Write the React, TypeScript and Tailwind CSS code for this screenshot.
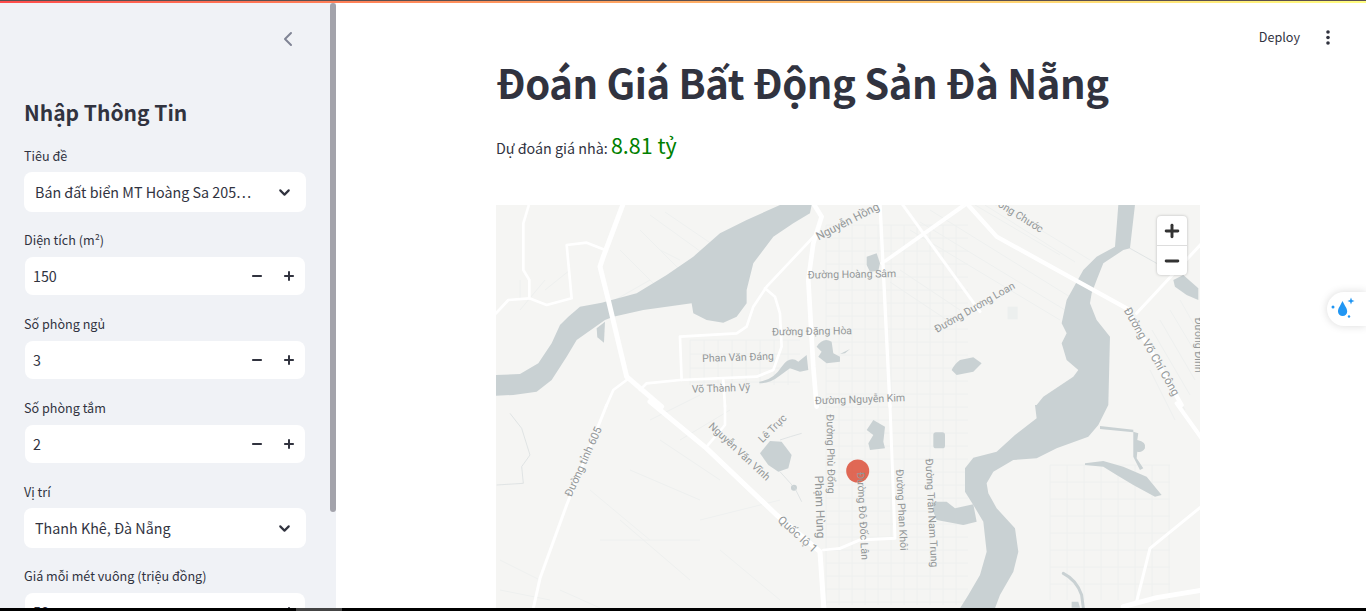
import { ChevronDown, ChevronLeft, Minus, Plus } from 'lucide-react';

const SANS = { fontFamily: '"Noto Sans CJK SC", "Noto Sans", sans-serif' };

const WATER = '#c9d1d3';
const ROAD = '#ffffff';
const GRID = '#eef0ef';

function SelectBox({ label, value }: { label: string; value: string }) {
  return (
    <div className="flex flex-col">
      <label className="h-[20px] text-[12.6px] leading-[20px] text-[#31333f]">{label}</label>
      <div className="mt-[6px] flex h-[40px] w-[282px] items-center justify-between rounded-lg bg-white pl-[11px] pr-[13px] text-[14.3px] text-[#31333f]">
        <span className="truncate">{value}</span>
        <ChevronDown size={17} strokeWidth={3} className="shrink-0" />
      </div>
    </div>
  );
}

function NumberBox({ label, value }: { label: string; value: string }) {
  return (
    <div className="flex flex-col pb-px">
      <label className="h-[20px] text-[12.6px] leading-[20px] text-[#31333f]">{label}</label>
      <div className="ml-px mt-[7px] flex h-[38px] w-[280px] items-center justify-between rounded-lg bg-white pl-[8px] pr-[9px] text-[14.3px] text-[#31333f]">
        <span>{value}</span>
        <div className="flex items-center gap-[18px]">
          <Minus size={14} strokeWidth={3.4} />
          <Plus size={14} strokeWidth={3.4} />
        </div>
      </div>
    </div>
  );
}

function Label({ x, y, r, t, size = 10.5 }: { x: number; y: number; r: number; t: string; size?: number }) {
  return (
    <text
      x={x}
      y={y}
      transform={`rotate(${r} ${x} ${y})`}
      textAnchor="middle"
      dominantBaseline="middle"
      fontFamily="Roboto, sans-serif"
      fontSize={size}
      fill="#939798"
    >
      {t}
    </text>
  );
}

// parallel street lines for the built-up blocks
function streets(x0: number, x1: number, y0: number, y1: number, step: number) {
  let d = '';
  for (let x = x0; x <= x1; x += step) d += `M${x} ${y0}V${y1}`;
  for (let y = y0; y <= y1; y += step) d += `M${x0} ${y}H${x1}`;
  return d;
}

function MapDrawing() {
  return (
    <svg viewBox="496 205 704 403" className="block h-[403px] w-[704px]">
      <rect x="496" y="205" width="704" height="403" fill="#f5f5f3" />

      {/* faint street blocks */}
      <g stroke={GRID} strokeWidth="1" fill="none">
        <path d={streets(826, 968, 225, 605, 13)} />
        <path d={streets(690, 800, 340, 385, 14)} />
        <path d={streets(1050, 1170, 465, 600, 17)} />
        <path d="M930 210L1075 300M920 222L1065 310M910 230L1060 320M1000 205L1090 260M985 205L1075 262M975 205L1060 255M900 270L960 310M890 282L950 322" />
        <path d="M1160 320L1195 380M1152 330L1190 395M1145 340L1185 410M1150 370L1175 420M1180 300L1200 335M1170 310L1200 360" />
        <path d="M640 230L700 290M620 250L670 300M650 215L740 280M665 212L750 270M630 470L700 500M590 490L650 540M600 540H700M620 520L690 580M700 520L780 500M720 550L780 600M660 440L720 480M500 560L540 580M500 590L550 600M560 590L600 608" />
        <path d="M660 250L680 260M615 300L650 280M545 290L570 270M520 310L545 280M520 280V300M650 420L700 395M680 440L730 410" />
      </g>

      {/* water */}
      <g fill={WATER}>
        <g transform="translate(480 200) scale(0.3333)">
          <path d="M48 525L120 522L175 490L215 430L240 375L265 350L300 320L365 308L395 300L470 280L560 225L640 170L720 100L800 60L900 15H995L990 40L940 70L880 110L850 150L820 190L800 270L800 310L770 350L730 368L680 360L640 340L635 310L560 320L490 330L400 350L375 360L340 385L290 420L260 470L215 540L170 575L100 585L48 587Z" />
          <path d="M350 385L375 365L372 428L352 412Z" />
          <path d="M1010 440Q1030 410 1055 425L1060 460L1080 470V485L1040 490L1015 470L1025 455Z" />
          <path d="M838 545Q880 540 905 500Q930 465 955 485L980 465L985 510L960 515L930 505L895 530Q870 550 838 550Z" />
        </g>
        <g transform="translate(840 200) scale(0.3333)">
          <path d="M835 15H885L870 145L850 150L790 190L770 240L755 280L750 310L770 360L810 410L805 615H590L610 590L700 530L715 510L680 480L665 430L680 400L665 370L680 300L705 255L730 210L770 170L825 140L830 80Z" />
          <path d="M1000 240L1030 225L1075 265V300L1040 285L1005 260Z" />
          <path d="M80 170L110 160L120 190L115 212L90 215L80 195Z" />
          <path d="M335 510Q345 490 360 480L400 472L425 490L400 515L350 525Z" />
          <path d="M0 462L30 447L15 460Z" />
        </g>
        <g transform="translate(480 405) scale(0.3333)">
          <path d="M840 145L870 108L905 110L935 150L925 190L895 200L865 180Z" />
          <circle cx="942" cy="248" r="9" />
        </g>
        <g transform="translate(840 405) scale(0.3333)">
          <path d="M585 0H805L775 60L745 95L650 130L590 160L520 165L460 200L440 235L445 265L470 310L525 370L535 440L520 500L480 570L465 610H360L385 570L420 510L440 440L430 350L400 300L375 260V190L400 158L470 140L525 90L590 40Z" />
          <path d="M280 290H320L345 310L400 298L410 350L370 360L290 345L280 320Z" />
          <path d="M735 175L790 168L850 185L885 200L920 215L965 270L945 275L880 240L830 210L790 185L735 180Z" />
          <path d="M780 63L880 74V82L780 72Z" />
          <path d="M880 80L895 85L892 105Q920 110 915 130Q905 145 892 140L890 160L910 190L900 195L880 155Z" />
          <rect x="280" y="82" width="35" height="48" rx="8" />
          <path d="M100 45L135 65L130 110L135 130L90 135L85 115L100 90L80 75Z" />
          <path d="M695 590L715 590L720 608H695Z" />
        </g>
      </g>
      <g transform="translate(840 405) scale(0.3333)" fill="none" stroke={WATER}>
        <path d="M670 505Q710 525 725 570L730 608" strokeWidth="9" strokeLinecap="round" />
      </g>
      <g transform="translate(480 405) scale(0.3333)" fill="none" stroke="#d5dbdc" strokeWidth="2">
        <path d="M900 105Q930 95 965 85M900 200L945 250L965 290M90 25L125 70L150 150L125 185L130 235L50 240" />
      </g>
      <g transform="translate(840 200) scale(0.3333)">
        <rect x="503" y="320" width="30" height="38" fill="#ecefee" />
        <path d="M870 145L950 190" stroke="#d5dbdc" strokeWidth="2" fill="none" />
      </g>

      {/* roads */}
      <g fill="none" stroke={ROAD} strokeLinejoin="round" strokeLinecap="round">
        <g transform="translate(480 200) scale(0.3333)">
          <path d="M430 10L370 170L360 200L385 300L440 530L545 620" strokeWidth="15" />
          <path d="M148 10L130 70V210L148 240V295L200 315L275 295L260 135L320 128L370 148" strokeWidth="8" />
          <path d="M48 340L85 300L148 295" strokeWidth="8" />
          <path d="M1003 108L860 260L820 320L800 380L770 400L600 410L605 540" strokeWidth="8" />
          <path d="M855 265L885 290L900 340L905 440L880 510L830 530L600 540L500 550L480 570" strokeWidth="8" />
          <path d="M440 540L400 570L378 620" strokeWidth="8" />
          <path d="M1000 10L1025 50L1000 130L985 240L1000 500L1010 620" strokeWidth="14" />
          <path d="M730 540L735 620" strokeWidth="8" />
        </g>
        <g transform="translate(480 405) scale(0.3333)">
          <path d="M510 -10L680 130L890 330L1020 440L1032 615" strokeWidth="15" />
          <path d="M380 0L260 300L180 520L160 610" strokeWidth="9" />
          <path d="M735 0V60L680 125" strokeWidth="8" />
          <path d="M1030 435L1080 430" strokeWidth="8" />
        </g>
        <g transform="translate(840 200) scale(0.3333)">
          <path d="M120 10L150 620" strokeWidth="10" />
          <path d="M185 10L420 335" strokeWidth="9" />
          <path d="M125 190L370 15" strokeWidth="9" />
          <path d="M138 185L380 15" strokeWidth="5" />
          <path d="M380 10L470 110L860 325L1025 615" strokeWidth="13" />
          <path d="M890 340L1090 125" strokeWidth="9" />
        </g>
        <g transform="translate(840 405) scale(0.3333)">
          <path d="M150 0L165 400L60 405L0 430" strokeWidth="9" />
          <path d="M1090 300L930 430L890 590" strokeWidth="9" />
          <path d="M850 605L950 578L1090 555" strokeWidth="15" />
          <path d="M1010 -5L1085 100" strokeWidth="12" />
        </g>
      </g>

      {/* point on the map */}
      <circle cx={857.7} cy={471} r={11.5} fill="#dc4f38" fillOpacity={0.85} />

      {/* labels */}
      <Label x={848} y={222} r={-27} t="Nguyễn Hồng" size={11.5} />
      <Label x={852} y={275} r={-1} t="Đường Hoàng Sâm" />
      <Label x={812} y={332} r={-1} t="Đường Đặng Hòa" />
      <Label x={738} y={358} r={-2} t="Phan Văn Đáng" />
      <Label x={721} y={389} r={-2} t="Võ Thành Vỹ" />
      <Label x={860} y={400} r={-2} t="Đường Nguyễn Kim" />
      <Label x={975} y={308} r={-30} t="Đường Dương Loan" />
      <Label x={1001} y={205} r={32} t="Đường Lương Chước" />
      <Label x={1151} y={352} r={60} t="Đường Võ Chí Công" size={11.5} />
      <Label x={1198} y={345} r={90} t="Đường Đình" />
      <Label x={584} y={462} r={-66} t="Đường tỉnh 605" size={11} />
      <Label x={739} y={452} r={43} t="Nguyễn Văn Vĩnh" />
      <Label x={773} y={429} r={-45} t="Lê Trực" />
      <Label x={830} y={454} r={89} t="Đường Phù Đổng" />
      <Label x={819} y={507} r={88} t="Phạm Hùng" size={12} />
      <Label x={797} y={535} r={42} t="Quốc lộ 1" size={11.5} />
      <Label x={901} y={510} r={87} t="Đường Phan Khôi" />
      <Label x={931} y={513} r={87} t="Đường Trần Nam Trung" />
      <Label x={862} y={516} r={87} t="Đường Đô Đốc Lân" />
    </svg>
  );
}

export default function App() {
  return (
    <div className="relative flex h-[611px] w-[1366px] flex-col overflow-hidden bg-white" style={SANS}>
      <div className="h-px w-full shrink-0 bg-[#5c5050]" />
      <div className="h-[2px] w-full shrink-0 bg-gradient-to-r from-[#ff4b4b] to-[#fffd80]" />
      <div className="flex min-h-0 flex-1">
        {/* sidebar */}
        <aside className="relative flex w-[336px] shrink-0 flex-col overflow-hidden bg-[#f0f2f6] px-[24px]">
          <div className="flex h-[73px] shrink-0 items-center justify-end pr-[12px] pb-[2px] text-[#808495]">
            <ChevronLeft size={24} strokeWidth={2} />
          </div>
          <h2 className="h-[60px] shrink-0 pt-[20px] text-[21px] font-semibold leading-[32px] text-[#31333f]">Nhập Thông Tin</h2>
          <div className="flex flex-col gap-[18px] pt-[10px]">
            <SelectBox label="Tiêu đề" value="Bán đất biển MT Hoàng Sa 205…" />
            <NumberBox label="Diện tích (m²)" value="150" />
            <NumberBox label="Số phòng ngủ" value="3" />
            <NumberBox label="Số phòng tắm" value="2" />
            <SelectBox label="Vị trí" value="Thanh Khê, Đà Nẵng" />
            <NumberBox label="Giá mỗi mét vuông (triệu đồng)" value="58" />
          </div>
          <div className="absolute right-0 top-0 h-[509px] w-[6px] rounded-full bg-[#a3a3ab]" />
        </aside>

        {/* main column */}
        <main className="relative flex-1 overflow-hidden pl-[160px]">
          <div className="absolute right-[36px] top-[24px] flex items-center gap-[26px] text-[12.6px] leading-[20px] text-[#31333f]">
            <span>Deploy</span>
            <svg width="4" height="15" viewBox="0 0 4 15" fill="#31333f">
              <circle cx="2" cy="2" r="1.8" />
              <circle cx="2" cy="7.5" r="1.8" />
              <circle cx="2" cy="13" r="1.8" />
            </svg>
          </div>
          <h1 className="pt-[45px] text-[40px] font-bold leading-[68px] tracking-[-0.4px] text-[#31333f]">Đoán Giá Bất Động Sản Đà Nẵng</h1>
          <p className="mt-[13px] h-[76px] text-[14.3px] leading-[32px] text-[#31333f]">
            Dự đoán giá nhà: <span className="text-[21.5px] text-[#008000]">8.81 tỷ</span>
          </p>
          <div className="relative h-[403px] w-[704px]">
            <MapDrawing />
            <div className="absolute right-[13px] top-[11px] flex w-[30px] flex-col rounded bg-white text-[#333] shadow-[0_0_3px_rgba(0,0,0,0.25)]">
              <div className="flex h-[30px] items-center justify-center border-b border-[#ddd]">
                <Plus size={20} strokeWidth={3.5} />
              </div>
              <div className="flex h-[29px] items-center justify-center">
                <Minus size={20} strokeWidth={3.5} />
              </div>
            </div>
          </div>
        </main>
      </div>
      <div className="flex h-[3px] shrink-0 bg-black">
        <div className="ml-[296px] w-[46px] bg-[#444]" />
      </div>

      {/* floating widget on the right edge */}
      <div className="absolute right-0 top-[292px] flex h-[34px] w-[39px] items-center rounded-l-full bg-white pl-[3px] shadow-[0_0_8px_rgba(0,0,0,0.15)]">
        <svg width="26" height="26" viewBox="0 0 26 26" fill="#2196f3">
          <path d="M12.5 5C10.5 9.5 8 12 8 15.5a4.6 4.6 0 0 0 9.2 0C17.2 12 14.5 9.5 12.5 5Z" />
          <path d="M21 1.5l.9 2.6 2.6.9-2.6.9-.9 2.6-.9-2.6-2.6-.9 2.6-.9Z" />
          <circle cx="3" cy="11" r="1.5" />
          <circle cx="19" cy="20.5" r="1.2" />
        </svg>
      </div>
    </div>
  );
}
